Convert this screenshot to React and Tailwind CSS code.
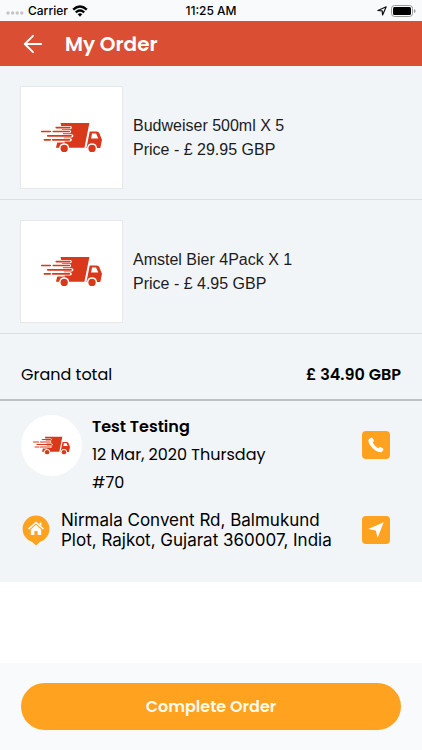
import { ArrowLeft } from "lucide-react";

const ITEMS = [
  { id: 1, name: "Budweiser 500ml", qty: 5, price: "29.95" },
  { id: 2, name: "Amstel Bier 4Pack", qty: 1, price: "4.95" },
];

function Truck({ className }) {
  return (
    <svg viewBox="78 127 184 92" className={className} fill="#d9381a">
      <path d="M137 129H224L209 204H123L127 188H150Z" />
      <path d="M215 205 225 155H246Q252 155 254 160L262 180 257 205Z" />
      <path d="M232 161H244L251 176H229Z" fill="#fff" />
      {/* speed lines */}
      <path
        d="M118 143H166M112 155H164M94 168H171M110 180H166"
        stroke="#fff"
        strokeWidth="10"
        strokeLinecap="round"
      />
      <path
        d="M124 143H165M80 155H106M115 155H163M98 168H169M88 180H106M113 180H164"
        stroke="#d9381a"
        strokeWidth="5"
        strokeLinecap="round"
      />
      <circle cx="148" cy="205" r="15" fill="#fff" />
      <circle cx="232" cy="205" r="15" fill="#fff" />
      <circle cx="148" cy="206" r="11" />
      <circle cx="232" cy="206" r="11" />
    </svg>
  );
}

function StatusBar() {
  return (
    <div className="grid h-[21px] grid-cols-3 items-center bg-[#f9fafc] px-1.5 font-['Inter',sans-serif] text-xs font-medium text-black">
      <div className="flex items-center gap-1">
        <svg viewBox="0 0 18 4" className="mt-1 h-1 w-[18px] shrink-0" fill="#c4c5c8">
          <circle cx="2" cy="2" r="1.7" />
          <circle cx="6.6" cy="2" r="1.7" />
          <circle cx="11.2" cy="2" r="1.7" />
          <circle cx="15.8" cy="2" r="1.7" />
        </svg>
        <span>Carrier</span>
        <svg viewBox="0 0 16 12" className="h-3 w-4" fill="none" stroke="#000" strokeWidth="2.4">
          <path d="M1.2 4.6Q8-1.4 14.8 4.6" />
          <path d="M3.8 7.4Q8 3.8 12.2 7.4" />
          <path d="M5.6 9.1Q8 7.3 10.4 9.1L8 11.7Z" fill="#000" stroke="none" />
        </svg>
      </div>
      <span className="text-center">11:25 AM</span>
      <div className="flex items-center justify-end gap-1">
        <svg viewBox="0 0 10 10" className="size-2.5" fill="none" stroke="#111" strokeWidth="1.2" strokeLinejoin="round">
          <path d="M9.2.8 5.6 9 5.2 4.9.9 4.5Z" />
        </svg>
        <svg viewBox="0 0 25 12" className="h-3 w-[25px]">
          <rect x=".5" y=".5" width="21" height="11" rx="3" fill="none" stroke="#999" />
          <rect x="2" y="2" width="18" height="8" rx="1.5" />
          <path d="M23 4Q24.6 4.6 24.6 6T23 8Z" fill="#999" />
        </svg>
      </div>
    </div>
  );
}

function OrderItem({ item }) {
  return (
    <li className="flex items-center gap-2.5 border-b border-[#dcdfe1] px-5 pt-5 pb-2.5">
      <div className="flex size-[103px] shrink-0 items-center justify-center border border-[#e6e9ea] bg-white">
        <Truck className="h-[31px] w-[61px]" />
      </div>
      <div className="font-['Liberation_Sans',sans-serif] text-base leading-6 text-[#1c1c1e]">
        <p>
          {item.name} X {item.qty}
        </p>
        <p>Price - £ {item.price} GBP</p>
      </div>
    </li>
  );
}

function ActionButton({ label, children }) {
  return (
    <button
      type="button"
      aria-label={label}
      className="flex size-7 shrink-0 items-center justify-center rounded bg-[#ffa220]"
    >
      {children}
    </button>
  );
}

function App() {
  return (
    <div className="flex min-h-screen flex-col bg-white font-['Poppins','Inter',sans-serif] text-black">
      <StatusBar />
      <header className="flex h-[45px] items-center gap-[18px] bg-[#da4f34] px-[19px] text-white">
        <button type="button" aria-label="Back">
          <ArrowLeft className="size-7" strokeWidth={1.6} />
        </button>
        <h1 className="text-xl font-semibold">My Order</h1>
      </header>

      <main className="bg-[#f1f5f7]">
        <ul>
          {ITEMS.map((item) => (
            <OrderItem key={item.id} item={item} />
          ))}
        </ul>
        <div className="flex h-[67px] items-center justify-between border-b-2 border-[#c0c3c5] px-[21px] pt-4">
          <span className="text-base">Grand total</span>
          <span className="text-base font-semibold">£ 34.90 GBP</span>
        </div>

        <section className="px-[21px] pt-3 pb-8">
          <div className="flex items-start">
            <div className="mt-0.5 flex size-[61px] shrink-0 items-center justify-center rounded-full bg-white">
              <Truck className="h-[19px] w-[37px]" />
            </div>
            <div className="ml-2.5 flex-1 text-base leading-7">
              <p className="font-semibold">Test Testing</p>
              <p>12 Mar, 2020 Thursday</p>
              <p>#70</p>
            </div>
            <div className="mr-[11px] pt-[18px]">
              <ActionButton label="Call customer">
                <svg viewBox="0 0 16 16" className="size-4" fill="#fff">
                  <path d="M1 2.2 3 .7Q3.8.2 4.4 1L5.8 3.3Q6.2 4 5.6 4.6L4.7 5.6Q6.5 9.2 10.2 11.2L11.4 10.2Q12 9.8 12.6 10.1L15 11.6Q15.8 12.2 15.3 13L14 14.8Q13.4 15.4 12.4 15.3 8 14.8 4.2 10.8.6 6.8.4 3.6.3 2.8 1 2.2Z" />
                </svg>
              </ActionButton>
            </div>
          </div>
          <div className="mt-[13px] flex items-center">
            <svg viewBox="0 0 28 31" className="ml-px h-[31px] w-7 shrink-0">
              <path d="M14 .5a13.5 13.5 0 0 1 4.2 26.3L14 30.5 9.8 26.8A13.5 13.5 0 0 1 14 .5Z" fill="#ffa220" />
              <path d="M7 13.6 14 7.4 21 13.6" fill="none" stroke="#fff" strokeWidth="1.5" strokeLinecap="round" />
              <path d="M17.6 7.4H19.4V11L17.6 9.4ZM14 9.8 19.2 14.4V20H15.6V16H12.4V20H8.8V14.4Z" fill="#fff" />
            </svg>
            <address className="ml-[11px] flex-1 font-['Inter',sans-serif] text-[17px] leading-5 not-italic">
              Nirmala Convent Rd, Balmukund Plot, Rajkot, Gujarat 360007, India
            </address>
            <div className="mr-[11px] ml-5">
              <ActionButton label="Open directions">
                <svg viewBox="0 0 16 16" className="size-4" fill="#fff">
                  <path d="M15.7.3 9.6 15.7 7.8 8.4.3 6.9Z" />
                </svg>
              </ActionButton>
            </div>
          </div>
        </section>
      </main>

      <footer className="mt-auto bg-[#f9fafc] px-[21px] py-5">
        <button
          type="button"
          className="h-[47px] w-full rounded-full bg-[#ffa220] text-base font-semibold text-[#fffbe8]"
        >
          Complete Order
        </button>
      </footer>
    </div>
  );
}

export default App;
